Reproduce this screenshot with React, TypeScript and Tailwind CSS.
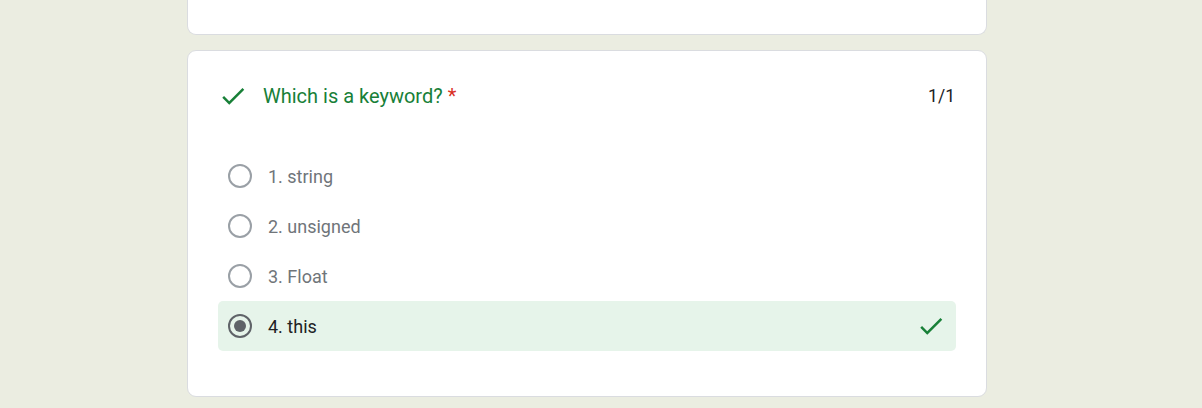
import React from "react";

interface Option {
    id: number;
    label: string;
    selected?: boolean;
    correct?: boolean;
}

const options: Option[] = [
    {id: 1, label: "1. string"},
    {id: 2, label: "2. unsigned"},
    {id: 3, label: "3. Float"},
    {id: 4, label: "4. this", selected: true, correct: true},
];

// material "check" glyph
const CheckIcon = ({className}: { className?: string }) => (
    <svg viewBox="0 0 24 24" className={className} fill="currentColor">
        <path d="M9 16.17L4.83 12l-1.42 1.41L9 19 21 7l-1.41-1.41z"/>
    </svg>
);

const Radio = ({checked}: { checked?: boolean }) => (
    <div
        className={`w-[24px] h-[24px] rounded-full border-2 flex items-center justify-center flex-shrink-0 ${
            checked ? "border-[#5f6368]" : "border-[#9aa0a6]"
        }`}
    >
        {checked && <div className="w-[12px] h-[12px] rounded-full bg-[#5f6368]"/>}
    </div>
);

const App = () => {
    return (
        <div
            className="min-h-[408px] bg-[#ebede1] flex flex-col items-center pr-[28px]"
            style={{fontFamily: "Roboto, 'Liberation Sans', sans-serif"}}
        >
            {/* previous card, mostly scrolled off */}
            <div className="w-[800px] h-[35px] bg-white border-x border-b border-[#dadce0] rounded-b-[9px]"/>

            <div className="w-[800px] mt-[15px] bg-white border border-[#dadce0] rounded-[9px] px-[30px] pt-[30px] pb-[45px]">
                <div className="flex items-center h-[30px]">
                    <CheckIcon className="w-[30px] h-[30px] text-[#188038]"/>
                    <div className="ml-[15px] text-[20px] text-[#188038] leading-[30px]">
                        Which is a keyword?
                        <span className="text-[#d93025] ml-[5px]">*</span>
                    </div>
                    <div className="ml-auto text-[17.5px] text-[#202124] mr-[1px]">1/1</div>
                </div>

                <div className="mt-[40px] flex flex-col">
                    {options.map((opt) => (
                        <div
                            key={opt.id}
                            className={`h-[50px] flex items-center pl-[10px] pr-[10px] rounded-[5px] ${
                                opt.selected ? "bg-[#e6f4ea]" : ""
                            }`}
                        >
                            <Radio checked={opt.selected}/>
                            <span
                                className={`ml-[16px] text-[18px] ${
                                    opt.selected ? "text-[#202124]" : "text-[#70757a]"
                                }`}
                            >
                                {opt.label}
                            </span>
                            {opt.correct && (
                                <CheckIcon className="ml-auto w-[30px] h-[30px] text-[#188038]"/>
                            )}
                        </div>
                    ))}
                </div>
            </div>
        </div>
    );
};

export default App;
